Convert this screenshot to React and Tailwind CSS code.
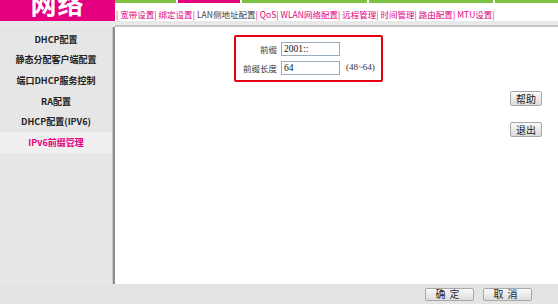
import React from "react";

const F = { fontFamily: '"Noto Sans CJK SC", "Liberation Sans", sans-serif' };
const S = { fontFamily: '"Liberation Serif", "Noto Sans CJK SC", serif' };

const navItems = ["宽带设置", "绑定设置", "LAN侧地址配置", "QoS", "WLAN网络配置", "远程管理", "时间管理", "路由配置", "MTU设置"];
const side = ["DHCP配置", "静态分配客户端配置", "端口DHCP服务控制", "RA配置", "DHCP配置(IPV6)", "IPv6前缀管理"];

function Btn({ children, className = "" }) {
  return (
    <div className={"flex items-center justify-center border border-[#a8a8a8] rounded-[2px] bg-gradient-to-b from-[#fafafa] to-[#dcdcdc] text-[10px] text-[#222] leading-none " + className} style={F}>
      {children}
    </div>
  );
}

export default function App() {
  return (
    <div className="w-[558px] h-[304px] flex flex-col bg-white overflow-hidden" style={F}>
      <div className="flex h-[27px]">
        <div className="w-[115px] flex flex-col">
          <div className="h-[21px] bg-[#e4007f] overflow-hidden flex justify-center">
            <span className="text-[26px] font-bold text-white leading-none -mt-[10px] tracking-[1px]">网络</span>
          </div>
          <div className="flex-1 bg-[#e8e8e8]" />
        </div>
        <div className="flex-1 flex flex-col">
          <div className="flex h-[3px]">
            <div className="w-[61px] bg-[#7dc242]" />
            <div className="w-[2px]" />
            <div className="w-[62px] bg-[#e4007f]" />
            <div className="w-[2px]" />
            <div className="w-[125px] bg-[#7dc242]" />
            <div className="w-[2px]" />
            <div className="w-[124px] bg-[#7dc242]" />
            <div className="w-[2px]" />
            <div className="flex-1 bg-[#7dc242]" />
          </div>
          <div className="h-[18px] flex items-center pt-[4px] text-[8.5px] text-[#e4007f] whitespace-nowrap pl-[1px]">
            <span>|</span>
            {navItems.map((n) => (
              <span key={n} className="ml-[2px]">
                <span className={n === "LAN侧地址配置" ? "text-[#444]" : ""}>{n}</span>|
              </span>
            ))}
          </div>
          <div className="h-[4px] bg-[#e8e8e8]" />
          <div className="h-[2px] bg-[#c6c6c6]" />
        </div>
      </div>

      <div className="flex flex-1">
        <div className="w-[115px] flex">
          <div className="flex-1 bg-[#e6e6e6] flex flex-col pt-[2px]">
            {side.map((s, i) => (
              <div
                key={s}
                className={
                  "h-[20.7px] flex items-center justify-center text-[9px] font-bold " +
                  (i === 5 ? "text-[#e4007f] bg-[#efefef]" : "text-[#222]")
                }
              >
                {s}
              </div>
            ))}
          </div>
          <div className="w-[1px] bg-[#c8c8c8]" />
          <div className="w-[2px] bg-[#8e8e8e]" />
        </div>
        <div className="flex-1 flex flex-col">
          <div className="ml-[119px] mt-[8px] w-[149px] h-[47px] border-2 border-[#e60012] rounded-[2px] flex flex-col pt-[5px] gap-[5px]">
            <div className="flex items-center h-[14px]">
              <div className="w-[41px] text-right text-[8.5px] text-[#333]">前缀</div>
              <div className="ml-[4px] w-[59px] h-[14px] border border-[#9ab] flex items-center px-[2px] text-[9.5px] text-[#111]" style={S}>2001::</div>
            </div>
            <div className="flex items-center h-[14px]">
              <div className="w-[41px] text-right text-[8.5px] text-[#333] whitespace-nowrap">前缀长度</div>
              <div className="ml-[4px] w-[59px] h-[14px] border border-[#9ab] flex items-center px-[2px] text-[9.5px] text-[#111]" style={S}>64</div>
              <div className="ml-[6px] text-[9px] text-[#333] whitespace-nowrap" style={S}>(48~64)</div>
            </div>
          </div>
          <div className="flex flex-col items-end mr-[16px] mt-[9px] gap-[16px]">
            <Btn className="w-[32px] h-[15px]">帮助</Btn>
            <Btn className="w-[32px] h-[15px]">退出</Btn>
          </div>
        </div>
      </div>

      <div className="h-[20px] bg-[#e4e4e4] flex items-center justify-end pr-[26px] gap-[9px]">
        <Btn className="w-[49px] h-[13px] tracking-[4px]">确定</Btn>
        <Btn className="w-[49px] h-[13px] tracking-[4px]">取消</Btn>
      </div>
    </div>
  );
}
